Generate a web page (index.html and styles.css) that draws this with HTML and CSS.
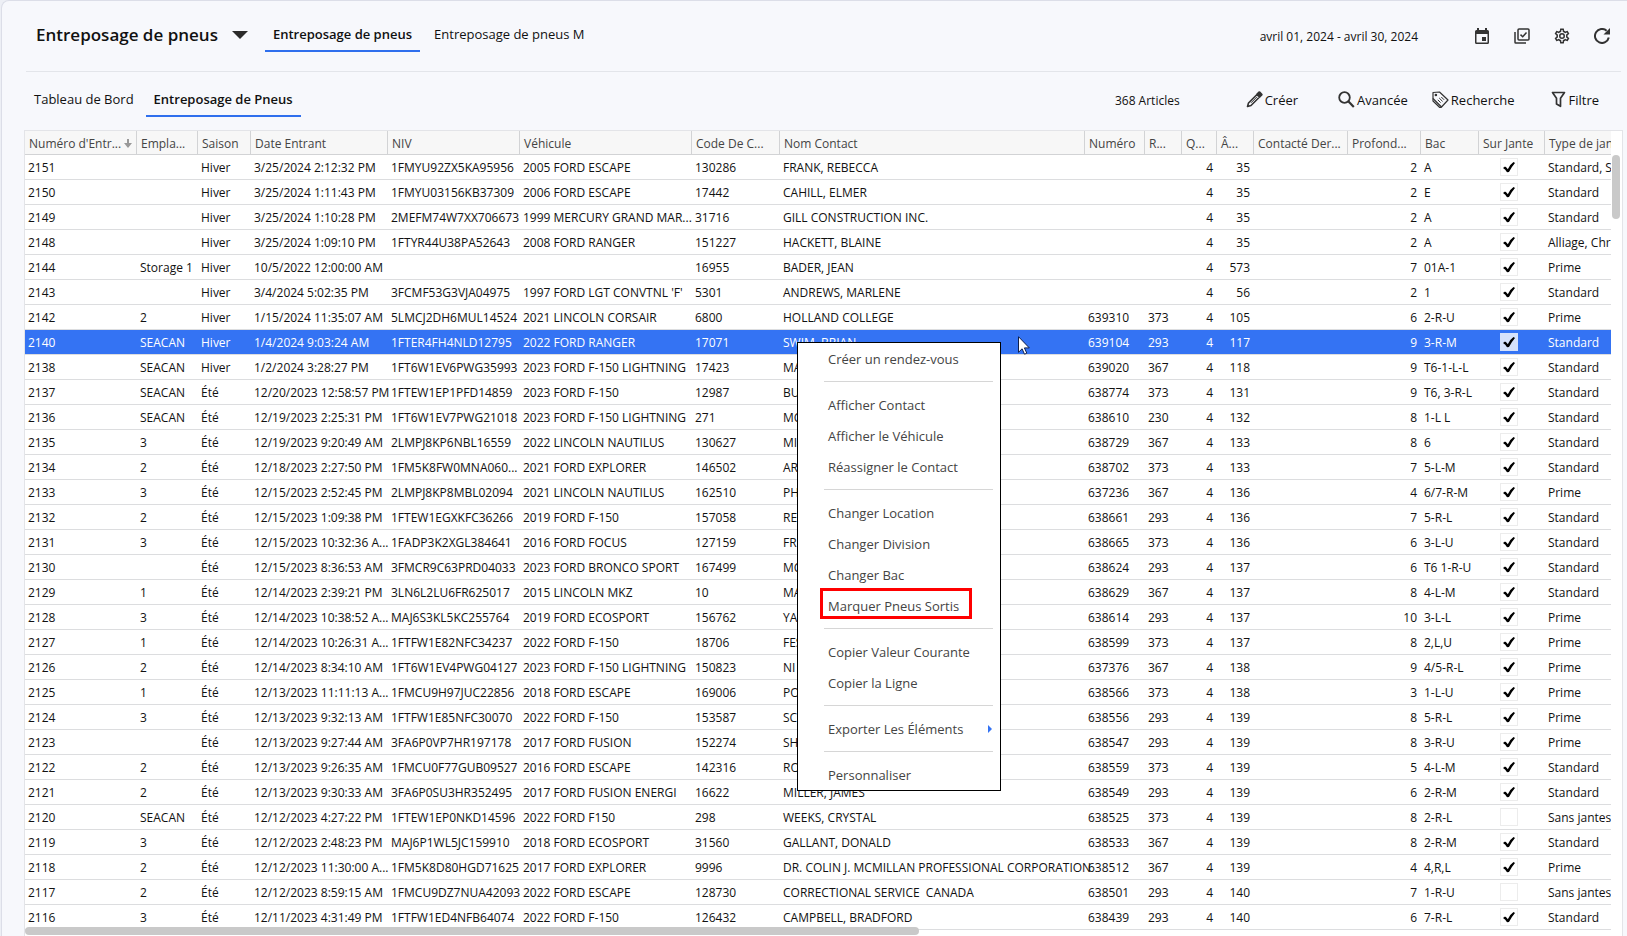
FILE: index.html
```html
<!DOCTYPE html>
<html lang="fr">
<head>
    <meta charset="UTF-8">
    <meta name="viewport" content="width=device-width, initial-scale=1.0">
    <title>Entreposage de pneus</title>
    <link rel="stylesheet" href="styles.css">
</head>
<body>

    <div class="app">
        <header class="topbar">
            <h1 class="title">Entreposage de pneus</h1>
            <button type="button" class="icon-btn caret" aria-label="Changer de module">
                <svg width="16" height="8" viewBox="0 0 16 8"><path d="M0 0h16L8 8z" fill="#2b2b2b"/></svg>
            </button>
            <nav class="tabs">
                <a href="#" class="tab active">Entreposage de pneus</a>
                <a href="#" class="tab">Entreposage de pneus M</a>
            </nav>
            <span class="period">avril 01, 2024 - avril 30, 2024</span>
            <div class="top-icons">
                <button type="button" class="icon-btn" aria-label="Calendrier">
                    <svg width="16" height="16" viewBox="0 0 16 16"><path fill="#333" fill-rule="evenodd" d="M3 0h2v2h6V0h2v2h.5A1.5 1.5 0 0 1 15 3.500v11a1.500 1.500 0 0 1-1.500 1.500h-11A1.500 1.500 0 0 1 1 14.500v-11A1.500 1.500 0 0 1 2.500 2H3zM2.500 6v8.500h11V6zM8 9h4v4H8z"/></svg>
                </button>
                <button type="button" class="icon-btn" aria-label="Tâches">
                    <svg width="16" height="16" viewBox="0 0 16 16" fill="none" stroke="#333" stroke-width="1.5"><rect x="4" y="1" width="11" height="11" rx="1"/><path d="M1 4v10.200a.8.8 0 0 0 .8.8H12M6.500 6.600l2.200 2.100 3.800-4.200"/></svg>
                </button>
                <button type="button" class="icon-btn" aria-label="Paramètres">
                    <svg width="18" height="18" viewBox="0 0 24 24"><path fill="#333" d="M12 8a4 4 0 1 1 0 8 4 4 0 0 1 0-8m0 2a2 2 0 1 0 0 4 2 2 0 0 0 0-4m-2 12c-.25 0-.46-.18-.5-.42l-.37-2.650c-.63-.25-1.170-.59-1.690-.99l-2.490 1.010c-.22.080-.49 0-.61-.22l-2-3.460a.493.493 0 0 1 .12-.64l2.110-1.660L4.500 12l.07-1-2.110-1.630a.493.493 0 0 1-.12-.64l2-3.460c.12-.22.39-.31.61-.22l2.490 1c.52-.39 1.060-.73 1.690-.98l.37-2.650c.04-.24.25-.42.5-.42h4c.25 0 .46.18.5.42l.37 2.650c.63.25 1.170.59 1.690.98l2.490-1c.22-.09.49 0 .61.22l2 3.460c.13.22.07.49-.12.64L19.430 11l.07 1-.07 1 2.110 1.630c.19.15.25.42.12.64l-2 3.460c-.12.22-.39.31-.61.22l-2.490-1c-.52.39-1.060.73-1.690.98l-.37 2.650c-.04.24-.25.42-.5.42zm1.250-18-.37 2.610c-1.200.25-2.260.89-3.030 1.780L5.440 7.350l-.75 1.300L6.800 10.200a6.550 6.550 0 0 0 0 3.600l-2.120 1.560.75 1.300 2.430-1.040c.77.88 1.820 1.520 3.010 1.760l.37 2.620h1.520l.37-2.610c1.190-.25 2.240-.89 3.010-1.770l2.430 1.040.75-1.300-2.120-1.550c.4-1.170.4-2.440 0-3.610l2.110-1.550-.75-1.300-2.410 1.040a5.420 5.420 0 0 0-3.030-1.770L12.750 4z"/></svg>
                </button>
                <button type="button" class="icon-btn" aria-label="Actualiser">
                    <svg width="16" height="16" viewBox="0 0 16 16"><path d="M14.800 9.600A7 7 0 1 1 12.600 2.700" fill="none" stroke="#333" stroke-width="2"/><path d="M16 0v6.500H9.500z" fill="#333"/></svg>
                </button>
            </div>
        </header>

        <div class="toolbar">
            <nav class="tabs">
                <a href="#" class="tab">Tableau de Bord</a>
                <a href="#" class="tab active">Entreposage de Pneus</a>
            </nav>
            <span class="count">368 Articles</span>
            <button type="button" class="tool create">
                <svg width="17" height="17" viewBox="0 0 17 17"><path d="M1.500 15.500l1-3.500L11 3.500l2.500 2.500L5 14.500z" fill="none" stroke="#333" stroke-width="1.600" stroke-linejoin="round"/><path d="M5 11.800L11 5.800" stroke="#333" stroke-width="1"/><path d="M10.300 2.700L12.500.6a1.200 1.200 0 0 1 1.700 0L16.300 2.700a1.200 1.200 0 0 1 0 1.700L14.200 6.600z" fill="#333"/></svg>
                Créer
            </button>
            <button type="button" class="tool advanced">
                <svg width="17" height="17" viewBox="0 0 17 17" fill="none" stroke="#333"><circle cx="6.500" cy="6.500" r="5.300" stroke-width="1.800"/><path d="M10.300 10.300l5.500 5.700" stroke-width="2.200"/></svg>
                Avancée
            </button>
            <button type="button" class="tool search">
                <svg width="17" height="17" viewBox="0 0 17 17" fill="none" stroke="#333" stroke-width="1.200" stroke-linejoin="round"><path d="M1 1.500L7.500 1l8.500 8-6.500 7L1 7.500z"/><path d="M1 7.500v2.500l6.500 6.300h2"/><circle cx="3.900" cy="4" r=".7"/><path d="M5.800 8.800l2.800 2.800M7.200 7l3.400 3.400M9.300 6l2.800 2.800" stroke-width="1"/></svg>
                Recherche
            </button>
            <button type="button" class="tool">
                <svg width="15" height="17" viewBox="0 0 15 17"><path d="M1.500 1.500h12L9.500 7.300v8L5.500 13V7.300z" fill="none" stroke="#333" stroke-width="1.700" stroke-linejoin="round"/></svg>
                Filtre
            </button>
        </div>

        <main class="grid">
            <div class="grid-view">
                <table class="grid-table">
                    <colgroup>
                        <col class="c-id"><col class="c-loc"><col class="c-season"><col class="c-date">
                        <col class="c-vin"><col class="c-vehicle"><col class="c-code"><col class="c-name">
                        <col class="c-num"><col class="c-r"><col class="c-qty"><col class="c-age">
                        <col class="c-last"><col class="c-depth"><col class="c-bin"><col class="c-rim">
                        <col class="c-type">
                    </colgroup>
                    <thead>
                        <tr>
                            <th class="sorted">Numéro d'Entr...<svg width="8" height="9" viewBox="0 0 8 9"><path d="M3 0h2v4h3L4 9 0 4h3z" fill="#999"/></svg></th>
                            <th>Empla...</th>
                            <th>Saison</th>
                            <th>Date Entrant</th>
                            <th>NIV</th>
                            <th>Véhicule</th>
                            <th>Code De C...</th>
                            <th>Nom Contact</th>
                            <th>Numéro</th>
                            <th>R...</th>
                            <th>Q...</th>
                            <th>Â...</th>
                            <th>Contacté Der...</th>
                            <th>Profond...</th>
                            <th>Bac</th>
                            <th>Sur Jante</th>
                            <th>Type de jante</th>
                        </tr>
                    </thead>
                    <tbody id="rows"></tbody>
                </table>
            </div>
            <div class="scroll-y"></div>
            <div class="scroll-x"></div>
        </main>

        <div class="menu" role="menu">
            <button type="button" role="menuitem">Créer un rendez-vous</button>
            <hr>
            <button type="button" role="menuitem">Afficher Contact</button>
            <button type="button" role="menuitem">Afficher le Véhicule</button>
            <button type="button" role="menuitem">Réassigner le Contact</button>
            <hr>
            <button type="button" role="menuitem">Changer Location</button>
            <button type="button" role="menuitem">Changer Division</button>
            <button type="button" role="menuitem">Changer Bac</button>
            <button type="button" role="menuitem" class="marked">Marquer Pneus Sortis</button>
            <hr>
            <button type="button" role="menuitem">Copier Valeur Courante</button>
            <button type="button" role="menuitem">Copier la Ligne</button>
            <hr>
            <button type="button" role="menuitem" class="has-sub">Exporter Les Éléments
                <svg width="4" height="8" viewBox="0 0 4 8"><path d="M0 0l4 4-4 4z" fill="#3473f3"/></svg>
            </button>
            <hr>
            <button type="button" role="menuitem">Personnaliser</button>
        </div>

        <svg class="pointer" width="12" height="19" viewBox="0 0 12 19"><path d="M.5.7v15.600l3.600-3.500 2.400 5.400 2.300-1-2.400-5.300h4.900z" fill="#fff" stroke="#10204a"/></svg>
    </div>

    <script src="script.js"></script>
</body>
</html>
```
FILE: styles.css
```css
/* Page */
*, *::before, *::after {
    box-sizing: border-box;
}

body {
    margin: 0;
    background-color: #edeff5;
    font-family: "Open Sans", "Noto Sans", sans-serif;
    font-size: 12px;
    color: #111;
}

button {
    font: inherit;
    color: inherit;
    background: none;
    border: none;
    padding: 0;
    cursor: pointer;
}

svg {
    display: block;
    flex: none;
}

.app {
    position: relative;
    display: flex;
    flex-direction: column;
    height: 100vh;
    margin-left: 1px;
    padding: 0 4px 0 23px;
    border-top: 1px solid #dcdee8;
    border-left: 1px solid #dcdee8;
    border-top-left-radius: 8px;
    background-color: #f7f8fc;
    overflow: hidden;
}

/* Top bar */
.topbar {
    display: flex;
    align-items: center;
    height: 71px;
    margin: 0 2px 0 1px;
    padding: 0 11px 0 10px;
    border-bottom: 1px solid #e3e5ea;
}

.title {
    margin: 0;
    padding-bottom: 2px;
    font-size: 17px;
    font-weight: 600;
    line-height: 24px;
}

.caret {
    margin: 0 17px 0 14px;
    padding-bottom: 2px;
}

.tabs {
    display: flex;
    gap: 6px;
}

.tab {
    height: 32px;
    padding: 0 8px;
    border-bottom: 2px solid transparent;
    font-size: 13px;
    line-height: 28px;
    color: #111;
    text-decoration: none;
    white-space: nowrap;
}

.tab.active {
    border-color: #2f6fed;
    font-weight: 600;
}

.period {
    margin-left: auto;
}

.top-icons {
    display: flex;
    gap: 24px;
    margin-left: 56px;
}

.icon-btn {
    display: flex;
    align-items: center;
    justify-content: center;
}

.top-icons .icon-btn {
    width: 16px;
    height: 16px;
}

/* Toolbar */
.toolbar {
    display: flex;
    align-items: center;
    height: 58px;
    padding: 0 24px 0 1px;
}

.toolbar .tabs {
    gap: 4px;
}

.count {
    margin: 0 66px 0 auto;
    padding-bottom: 2px;
}

.tool {
    display: flex;
    align-items: center;
    gap: 2px;
    padding-bottom: 3px;
    font-size: 13px;
}

.create {
    margin-right: 40px;
}

.advanced {
    margin-right: 24px;
}

.search {
    margin-right: 37px;
}

/* Grid */
.grid {
    position: relative;
    flex: 1;
    min-height: 0;
    padding-right: 11px;
    border: 1px solid #e3e4e8;
    border-bottom: none;
    margin-left: -1px;
    background-color: #fff;
}

.grid-view {
    height: 100%;
    overflow: hidden;
}

.grid-table {
    width: 1620px;
    table-layout: fixed;
    border-collapse: separate;
    border-spacing: 0;
}

.c-id { width: 112px; }
.c-loc { width: 61px; }
.c-season { width: 53px; }
.c-date { width: 137px; }
.c-vin { width: 132px; }
.c-vehicle { width: 172px; }
.c-code { width: 88px; }
.c-name { width: 305px; }
.c-num { width: 60px; }
.c-r { width: 37px; }
.c-qty { width: 35px; }
.c-age { width: 37px; }
.c-last { width: 94px; }
.c-depth { width: 73px; }
.c-bin { width: 58px; }
.c-rim { width: 66px; }
.c-type { width: 100px; }

.grid-table th {
    height: 24px;
    padding: 2px 0 0 4px;
    border-right: 1px solid #d2d3d5;
    border-bottom: 1px solid #d2d3d5;
    background-color: #f7f7f7;
    color: #444;
    font-weight: 400;
    line-height: 21px;
    text-align: left;
    white-space: nowrap;
}

.sorted svg {
    display: inline-block;
    margin-left: 3px;
}

.grid-table td {
    height: 25px;
    padding: 2px 0 0 3px;
    border-bottom: 1px solid #dcdddf;
    line-height: 22px;
    white-space: pre;
}

.grid-table .num {
    padding-right: 4px;
    text-align: right;
}

.grid-table .check {
    padding: 0 6px 0 0;
}

.selected td {
    background-color: #3473f3;
    color: #fff;
}

.rim {
    display: block;
    appearance: none;
    width: 18px;
    height: 18px;
    margin: 0 auto;
    border: 1px solid #ececec;
    background-color: #fff;
}

.selected .rim {
    border-color: #d5e1fb;
    background-color: #d5e1fb;
}

.rim:checked::before {
    content: "";
    display: block;
    width: 16px;
    height: 16px;
    background-color: #000;
    clip-path: path("M2 9 L4 7.500 Q6 8.500 6.800 10.200 Q8.800 5.500 12.500 3 L14 4 Q10.500 8 8 13 L6 13.300 Q4.500 10.500 2 9 Z");
}

.scroll-y {
    position: absolute;
    top: 24px;
    right: 2px;
    width: 8px;
    height: 64px;
    border-radius: 4px;
    background-color: #c9c9c9;
}

.scroll-x {
    position: absolute;
    left: 0;
    bottom: 1px;
    width: 56%;
    height: 8px;
    border-radius: 4px;
    background-color: #c9c9c9;
}

/* Context menu */
.menu {
    position: absolute;
    left: 795px;
    top: 341px;
    width: 204px;
    border: 1px solid #000;
    background-color: #fff;
    color: #444;
    font-size: 13px;
}

.menu button {
    display: flex;
    align-items: center;
    position: relative;
    width: 100%;
    height: 31px;
    padding: 0 8px 0 30px;
    white-space: nowrap;
}

.menu hr {
    height: 1px;
    margin: 7px 7px 7px 26px;
    border: none;
    background-color: #d6d6d6;
}

.menu .has-sub {
    justify-content: space-between;
}

.menu .marked::after {
    content: "";
    position: absolute;
    left: 22px;
    top: -2px;
    width: 152px;
    height: 31px;
    border: 3px solid #f00;
}

.pointer {
    position: absolute;
    left: 1016px;
    top: 335px;
}
```
FILE: script.js
```js
// id, location, season, date, vin, vehicle, code, contact, number, r, qty, age, depth, bin, on rim, rim type
const data = [
    ['2151', '', 'Hiver', '3/25/2024 2:12:32 PM', '1FMYU92ZX5KA95956', '2005 FORD ESCAPE', '130286', 'FRANK, REBECCA', '', '', 4, 35, 2, 'A', 1, 'Standard, Saison'],
    ['2150', '', 'Hiver', '3/25/2024 1:11:43 PM', '1FMYU03156KB37309', '2006 FORD ESCAPE', '17442', 'CAHILL, ELMER', '', '', 4, 35, 2, 'E', 1, 'Standard'],
    ['2149', '', 'Hiver', '3/25/2024 1:10:28 PM', '2MEFM74W7XX706673', '1999 MERCURY GRAND MAR...', '31716', 'GILL CONSTRUCTION INC.', '', '', 4, 35, 2, 'A', 1, 'Standard'],
    ['2148', '', 'Hiver', '3/25/2024 1:09:10 PM', '1FTYR44U38PA52643', '2008 FORD RANGER', '151227', 'HACKETT, BLAINE', '', '', 4, 35, 2, 'A', 1, 'Alliage, Chrome'],
    ['2144', 'Storage 1', 'Hiver', '10/5/2022 12:00:00 AM', '', '', '16955', 'BADER, JEAN', '', '', 4, 573, 7, '01A-1', 1, 'Prime'],
    ['2143', '', 'Hiver', '3/4/2024 5:02:35 PM', '3FCMF53G3VJA04975', "1997 FORD LGT CONVTNL 'F'", '5301', 'ANDREWS, MARLENE', '', '', 4, 56, 2, '1', 1, 'Standard'],
    ['2142', '2', 'Hiver', '1/15/2024 11:35:07 AM', '5LMCJ2DH6MUL14524', '2021 LINCOLN CORSAIR', '6800', 'HOLLAND COLLEGE', '639310', '373', 4, 105, 6, '2-R-U', 1, 'Prime'],
    ['2140', 'SEACAN', 'Hiver', '1/4/2024 9:03:24 AM', '1FTER4FH4NLD12795', '2022 FORD RANGER', '17071', 'SWIM, BRIAN', '639104', '293', 4, 117, 9, '3-R-M', 1, 'Standard'],
    ['2138', 'SEACAN', 'Hiver', '1/2/2024 3:28:27 PM', '1FT6W1EV6PWG35993', '2023 FORD F-150 LIGHTNING', '17423', 'MA', '639020', '367', 4, 118, 9, 'T6-1-L-L', 1, 'Standard'],
    ['2137', 'SEACAN', 'Été', '12/20/2023 12:58:57 PM', '1FTEW1EP1PFD14859', '2023 FORD F-150', '12987', 'BU', '638774', '373', 4, 131, 9, 'T6, 3-R-L', 1, 'Standard'],
    ['2136', 'SEACAN', 'Été', '12/19/2023 2:25:31 PM', '1FT6W1EV7PWG21018', '2023 FORD F-150 LIGHTNING', '271', 'MC', '638610', '230', 4, 132, 8, '1-L L', 1, 'Standard'],
    ['2135', '3', 'Été', '12/19/2023 9:20:49 AM', '2LMPJ8KP6NBL16559', '2022 LINCOLN NAUTILUS', '130627', 'MI', '638729', '367', 4, 133, 8, '6', 1, 'Standard'],
    ['2134', '2', 'Été', '12/18/2023 2:27:50 PM', '1FM5K8FW0MNA060...', '2021 FORD EXPLORER', '146502', 'AR', '638702', '373', 4, 133, 7, '5-L-M', 1, 'Standard'],
    ['2133', '3', 'Été', '12/15/2023 2:52:45 PM', '2LMPJ8KP8MBL02094', '2021 LINCOLN NAUTILUS', '162510', 'PH', '637236', '367', 4, 136, 4, '6/7-R-M', 1, 'Prime'],
    ['2132', '2', 'Été', '12/15/2023 1:09:38 PM', '1FTEW1EGXKFC36266', '2019 FORD F-150', '157058', 'RE', '638661', '293', 4, 136, 7, '5-R-L', 1, 'Standard'],
    ['2131', '3', 'Été', '12/15/2023 10:32:36 A...', '1FADP3K2XGL384641', '2016 FORD FOCUS', '127159', 'FR', '638665', '373', 4, 136, 6, '3-L-U', 1, 'Standard'],
    ['2130', '', 'Été', '12/15/2023 8:36:53 AM', '3FMCR9C63PRD04033', '2023 FORD BRONCO SPORT', '167499', 'MC', '638624', '293', 4, 137, 6, 'T6 1-R-U', 1, 'Standard'],
    ['2129', '1', 'Été', '12/14/2023 2:39:21 PM', '3LN6L2LU6FR625017', '2015 LINCOLN MKZ', '10', 'MA', '638629', '367', 4, 137, 8, '4-L-M', 1, 'Standard'],
    ['2128', '3', 'Été', '12/14/2023 10:38:52 A...', 'MAJ6S3KL5KC255764', '2019 FORD ECOSPORT', '156762', 'YA', '638614', '293', 4, 137, 10, '3-L-L', 1, 'Prime'],
    ['2127', '1', 'Été', '12/14/2023 10:26:31 A...', '1FTFW1E82NFC34237', '2022 FORD F-150', '18706', 'FES', '638599', '373', 4, 137, 8, '2,L,U', 1, 'Prime'],
    ['2126', '2', 'Été', '12/14/2023 8:34:10 AM', '1FT6W1EV4PWG04127', '2023 FORD F-150 LIGHTNING', '150823', 'NI', '637376', '367', 4, 138, 9, '4/5-R-L', 1, 'Prime'],
    ['2125', '1', 'Été', '12/13/2023 11:11:13 A...', '1FMCU9H97JUC22856', '2018 FORD ESCAPE', '169006', 'PO', '638566', '373', 4, 138, 3, '1-L-U', 1, 'Prime'],
    ['2124', '3', 'Été', '12/13/2023 9:32:13 AM', '1FTFW1E85NFC30070', '2022 FORD F-150', '153587', 'SC', '638556', '293', 4, 139, 8, '5-R-L', 1, 'Prime'],
    ['2123', '', 'Été', '12/13/2023 9:27:44 AM', '3FA6P0VP7HR197178', '2017 FORD FUSION', '152274', 'SH', '638547', '293', 4, 139, 8, '3-R-U', 1, 'Prime'],
    ['2122', '2', 'Été', '12/13/2023 9:26:35 AM', '1FMCU0F77GUB09527', '2016 FORD ESCAPE', '142316', 'RO', '638559', '373', 4, 139, 5, '4-L-M', 1, 'Standard'],
    ['2121', '2', 'Été', '12/13/2023 9:30:33 AM', '3FA6P0SU3HR352495', '2017 FORD FUSION ENERGI', '16622', 'MILLER, JAMES', '638549', '293', 4, 139, 6, '2-R-M', 1, 'Standard'],
    ['2120', 'SEACAN', 'Été', '12/12/2023 4:27:22 PM', '1FTEW1EP0NKD14596', '2022 FORD F150', '298', 'WEEKS, CRYSTAL', '638525', '373', 4, 139, 8, '2-R-L', 0, 'Sans jantes'],
    ['2119', '3', 'Été', '12/12/2023 2:48:23 PM', 'MAJ6P1WL5JC159910', '2018 FORD ECOSPORT', '31560', 'GALLANT, DONALD', '638533', '367', 4, 139, 8, '2-R-M', 1, 'Standard'],
    ['2118', '2', 'Été', '12/12/2023 11:30:00 A...', '1FM5K8D80HGD71625', '2017 FORD EXPLORER', '9996', 'DR. COLIN J. MCMILLAN PROFESSIONAL CORPORATION', '638512', '367', 4, 139, 4, '4,R,L', 1, 'Prime'],
    ['2117', '2', 'Été', '12/12/2023 8:59:15 AM', '1FMCU9DZ7NUA42093', '2022 FORD ESCAPE', '128730', 'CORRECTIONAL SERVICE  CANADA', '638501', '293', 4, 140, 7, '1-R-U', 0, 'Sans jantes'],
    ['2116', '3', 'Été', '12/11/2023 4:31:49 PM', '1FTFW1ED4NFB64074', '2022 FORD F-150', '126432', 'CAMPBELL, BRADFORD', '638439', '293', 4, 140, 6, '7-R-L', 1, 'Standard']
];

const tbody = document.getElementById('rows');

data.forEach(function(row) {
    const tr = document.createElement('tr');
    if (row[0] === '2140') {
        tr.className = 'selected';
    }

    let html = '';
    row.forEach(function(value, i) {
        // "Contacté Dernier" is empty for every row
        if (i === 12) {
            html += '<td></td>';
        }
        if (i === 14) {
            html += '<td class="check"><input type="checkbox" class="rim" aria-label="Sur Jante ' + row[0] + '"' + (value ? ' checked' : '') + '></td>';
        } else {
            html += '<td' + (typeof value === 'number' ? ' class="num"' : '') + '>' + value + '</td>';
        }
    });

    tr.innerHTML = html;
    tbody.appendChild(tr);
});
```
